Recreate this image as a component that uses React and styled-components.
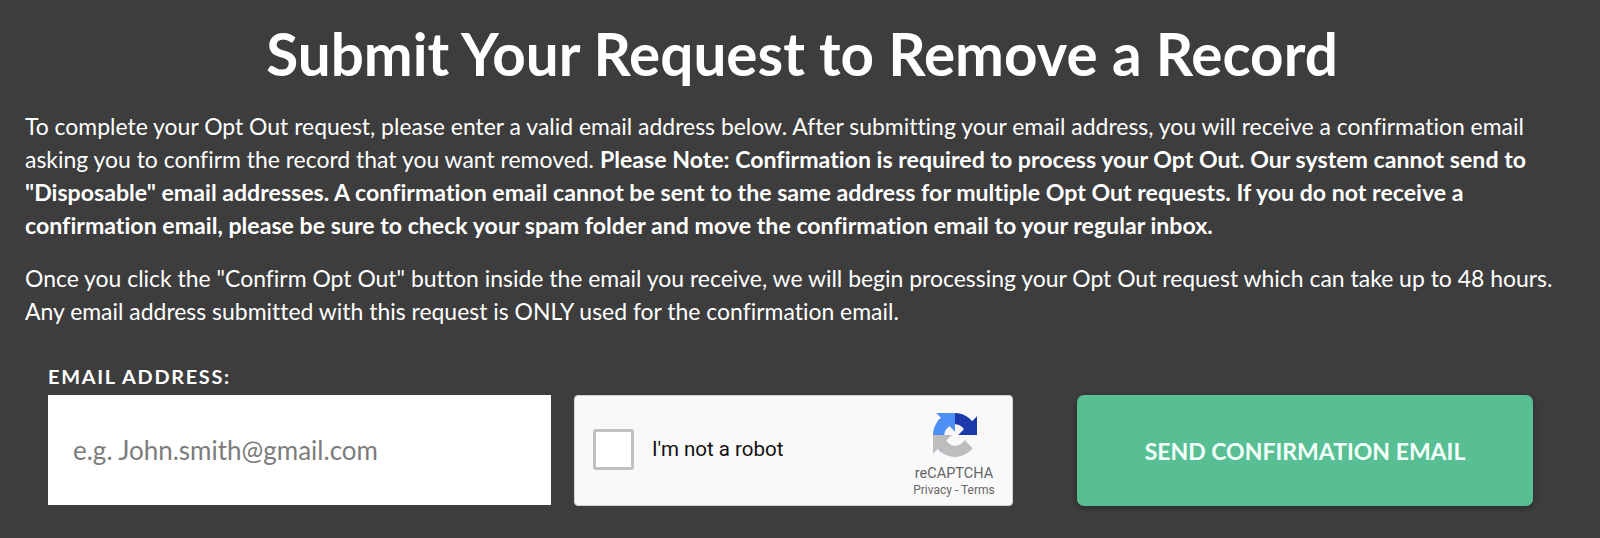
import React from 'react';
import styled, { createGlobalStyle } from 'styled-components';

const GlobalStyle = createGlobalStyle`
  html, body {
    margin: 0;
    padding: 0;
    background-color: #3d3d3d;
  }
`;

const RecaptchaLogo = () => (
  <StyledLogo viewBox='0 0 64 64' aria-hidden='true'>
    <path
      d='M64 32l-.001-1.375V4.68l-7.18 7.18C50.943 4.667 41.987.05 31.972.05 21.55.05 12.29 5.03 6.44 12.745l11.77 11.893a15.58 15.58 0 0 1 4.77-5.352c2.055-1.604 4.968-2.916 9-2.916.487 0 .863.057 1.14.164 4.99.394 9.314 3.148 11.86 7.146l-8.33 8.33c10.552-.04 22.472-.065 27.35.003'
      fill='#1c3aa9'
    />
    <path
      d='M32 0l-1.375.001H4.68l7.18 7.18C4.667 13.057.05 22.013.05 32.028c0 10.422 4.98 19.682 12.695 25.532l11.893-11.77a15.58 15.58 0 0 1-5.352-4.77c-1.604-2.055-2.916-4.968-2.916-9 0-.487.057-.863.164-1.14.394-4.99 3.148-9.314 7.146-11.86l8.33 8.33C31.97 16.798 31.945 4.878 32.013 0'
      fill='#4c8ff5'
    />
    <path
      d='M0 32l.001 1.375V59.32l7.18-7.18c5.876 7.193 14.832 11.81 24.847 11.81 10.422 0 19.682-4.98 25.532-12.695L45.79 39.362a15.58 15.58 0 0 1-4.77 5.352c-2.055 1.604-4.968 2.916-9 2.916-.487 0-.863-.057-1.14-.164-4.99-.394-9.314-3.148-11.86-7.146l8.33-8.33C17.798 32.03 5.878 32.055 1 31.987'
      fill='#bdbdbd'
    />
  </StyledLogo>
);

const App = () => {
  return (
    <StyledPage>
      <GlobalStyle />
      <StyledTitle>Submit Your Request to Remove a Record</StyledTitle>
      <StyledText>
        To complete your Opt Out request, please enter a valid email address
        below. After submitting your email address, you will receive a
        confirmation email asking you to confirm the record that you want
        removed.{' '}
        <StyledStrong>
          Please Note: Confirmation is required to process your Opt Out. Our
          system cannot send to "Disposable" email addresses. A confirmation
          email cannot be sent to the same address for multiple Opt Out
          requests. If you do not receive a confirmation email, please be sure
          to check your spam folder and move the confirmation email to your
          regular inbox.
        </StyledStrong>
      </StyledText>
      <StyledText>
        Once you click the "Confirm Opt Out" button inside the email you
        receive, we will begin processing your Opt Out request which can take
        up to 48 hours. Any email address submitted with this request is ONLY
        used for the confirmation email.
      </StyledText>
      <StyledForm>
        <StyledField>
          <StyledLabel htmlFor='email'>Email Address:</StyledLabel>
          <StyledInput
            id='email'
            type='text'
            placeholder='e.g. John.smith@gmail.com'
          />
        </StyledField>
        <StyledCaptcha>
          <StyledCheckbox />
          <StyledCaptchaText>I'm not a robot</StyledCaptchaText>
          <StyledBrand>
            <RecaptchaLogo />
            <StyledBrandName>reCAPTCHA</StyledBrandName>
            <StyledBrandLinks>Privacy - Terms</StyledBrandLinks>
          </StyledBrand>
        </StyledCaptcha>
        <StyledButton type='button'>Send Confirmation Email</StyledButton>
      </StyledForm>
    </StyledPage>
  );
};

export default App;

const StyledPage = styled.main`
  box-sizing: border-box;
  height: 538px;
  padding: 17px 25px 0;
  overflow: hidden;
  background-color: #3d3d3d;
  color: #fff;
  font-family: Lato, 'Open Sans', sans-serif;
  font-variant-ligatures: none;
`;

const StyledTitle = styled.h1`
  margin: 0 0 21px;
  padding-left: 4px;
  font-size: 58.4px;
  line-height: 72px;
  font-weight: 700;
  text-align: center;
`;

const StyledText = styled.p`
  margin: 0 0 20px;
  font-size: 22.95px;
  line-height: 33px;
`;

const StyledStrong = styled.strong`
  font-size: 23.15px;
  line-height: 33px;
`;

const StyledForm = styled.form`
  display: flex;
  align-items: flex-end;
  margin-top: 37px;
  padding-left: 23px;
`;

const StyledField = styled.div`
  display: flex;
  flex-direction: column;
  width: 503px;
  margin-right: 23px;
`;

const StyledLabel = styled.label`
  margin-bottom: 8px;
  font-size: 19.9px;
  line-height: 22px;
  font-weight: 700;
  letter-spacing: 1.7px;
  text-transform: uppercase;
`;

const StyledInput = styled.input`
  box-sizing: border-box;
  width: 100%;
  height: 110px;
  margin-bottom: 1px;
  padding: 0 25px;
  border: none;
  border-radius: 0;
  outline: none;
  background-color: #fff;
  font-family: inherit;
  font-size: 26px;
  color: #333;

  &::placeholder {
    color: #7c7c7c;
    opacity: 1;
  }
`;

const StyledCaptcha = styled.div`
  box-sizing: border-box;
  display: flex;
  align-items: center;
  width: 439px;
  height: 111px;
  margin-right: 64px;
  padding: 0 16px 0 18px;
  border: 1px solid #d3d3d3;
  border-radius: 4px;
  background-color: #f9f9f9;
  font-family: Roboto, 'Liberation Sans', sans-serif;
`;

const StyledCheckbox = styled.div`
  box-sizing: border-box;
  width: 41px;
  height: 41px;
  margin: 0 18px 3px 0;
  border: 3px solid #c1c1c1;
  border-radius: 3px;
  background-color: #fff;
`;

const StyledCaptchaText = styled.span`
  flex: 1;
  margin-bottom: 3px;
  font-size: 20.5px;
  color: #111;
`;

const StyledBrand = styled.div`
  display: flex;
  flex-direction: column;
  align-items: center;
  width: 84px;
  margin-top: 11px;
`;

const StyledLogo = styled.svg`
  display: block;
  width: 44px;
  height: 44px;
  margin: 0 0 8px 2px;
`;

const StyledBrandName = styled.span`
  font-size: 14.5px;
  line-height: 17px;
  color: #666;
`;

const StyledBrandLinks = styled.span`
  font-size: 12px;
  line-height: 17px;
  color: #666;
  white-space: nowrap;
`;

const StyledButton = styled.button`
  width: 456px;
  height: 111px;
  border: none;
  border-radius: 7px;
  background-color: #58bf94;
  box-shadow: 0 2px 6px rgba(0, 0, 0, 0.3);
  color: #f4fff9;
  font-family: inherit;
  font-size: 23px;
  font-weight: 700;
  text-transform: uppercase;
  cursor: pointer;
`;
